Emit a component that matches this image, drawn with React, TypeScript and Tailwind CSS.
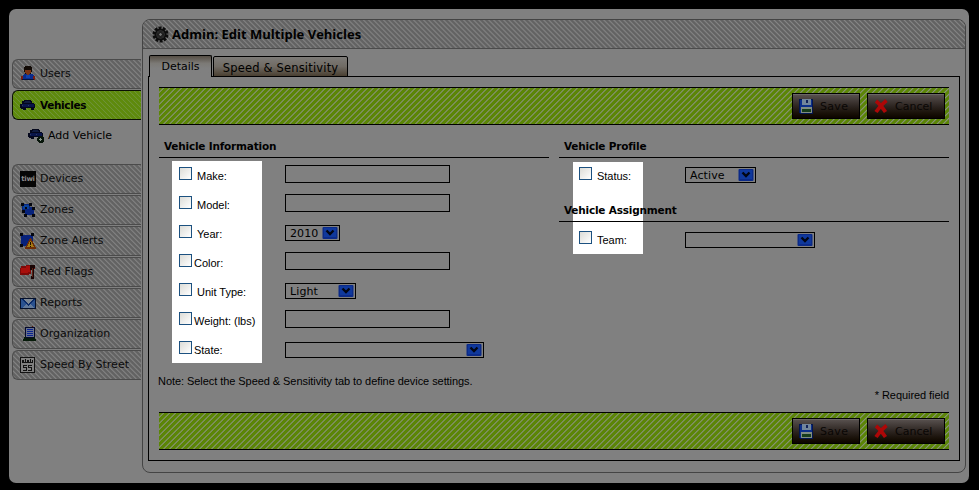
import type { ReactNode } from "react";

const GRAY_STRIPES =
  "bg-[repeating-linear-gradient(45deg,#616161_0px,#656565_1.3px,#858585_2.2px,#6c6c6c_3px,#616161_3.54px)]";
const GREEN_STRIPES =
  "bg-[repeating-linear-gradient(135deg,#5b8506_0px,#5b8506_2.3px,#88937a_3.2px,#88937a_3.4px,#5b8506_4.24px)]";
const ITEM_GREEN_STRIPES =
  "bg-[repeating-linear-gradient(45deg,#5e8a0c_0px,#5e8a0c_2px,#6f933a_2.8px,#5e8a0c_3.54px)]";

function Pic({ children }: { children: ReactNode }) {
  return (
    <svg width="16" height="16" viewBox="0 0 16 16" className="shrink-0" shapeRendering="crispEdges">
      {children}
    </svg>
  );
}

function UserIcon() {
  return (
    <Pic>
      <path d="M5 0h6v1h1v5h-1v3h-6v-3h-1v-5h1z" fill="#120a05" />
      <path d="M5 4h6v3h-1v2h-4v-2h-1z" fill="#7b3414" />
      <path d="M4 8h2l2 1 2-1h2l2 2v4h-12v-4z" fill="#0a2c8c" />
      <path d="M6 9h4v3h-4z" fill="#1140a8" />
      <path d="M1 10h2v4h-2zM13 10h2v4h-2z" fill="#7a1d10" />
      <path d="M2 13h12v1h-12z" fill="#051340" />
    </Pic>
  );
}

function CarShape() {
  return (
    <>
      <path d="M4 3h7v1h1v2h2v1h1v4h-1v2h-3v-2h-5v2h-3v-1h-2v-1h-1v-4h2v-3h1z" fill="#04071c" />
      <path d="M5 4h5l1 2h-7z" fill="#101c40" />
      <path d="M2 7h12v3h-12z" fill="#08144a" />
      <path d="M2 8h1v1h-1zM8 8h1v1h-1z" fill="#2c3a60" />
    </>
  );
}

function CarIcon() {
  return (
    <Pic>
      <CarShape />
    </Pic>
  );
}

function CarAddIcon() {
  return (
    <Pic>
      <g transform="translate(0 -2)">
        <CarShape />
      </g>
      <path d="M11 8h3l2 2v3l-2 2h-3l-2-2v-3z" fill="#07150a" />
      <path d="M12 10h1v1h1v1h-1v1h-1v-1h-1v-1h1z" fill="#87958a" />
    </Pic>
  );
}

function DeviceIcon() {
  return (
    <span className="flex h-4 w-4 shrink-0 items-center justify-center bg-[#060606] font-['DejaVu_Sans',sans-serif] text-[7px] leading-none font-bold tracking-[-0.3px] text-[#8a8a8a]">
      tiwi
    </span>
  );
}

function ZonesIcon() {
  return (
    <Pic>
      <path d="M2 2h8v3h4v8h-9v-4h-3z" fill="#07237c" />
      <path d="M3 3h6v4h-6z" fill="#0b419a" />
      <path
        d="M1 1h3v3h-3zM9 1h3v3h-3zM12 5h3v3h-3zM2 8h3v3h-3zM4 12h3v3h-3zM12 12h3v3h-3zM5 5h2v2h-2z"
        fill="#05070f"
      />
    </Pic>
  );
}

function AlertIcon() {
  return (
    <Pic>
      <path d="M1 2h12v11h-12z" fill="#07217a" />
      <path d="M0 0h3v3h-3zM11 0h3v3h-3zM0 11h3v3h-3z" fill="#05070f" />
      <path d="M10 5h1l5 10v1h-11v-1z" fill="#6d2e08" />
      <path d="M10 8h1l3 6h-7z" fill="#a57a13" />
      <path d="M10 9h1v3h-1zM10 13h1v1h-1z" fill="#1a0d00" />
    </Pic>
  );
}

function FlagIcon() {
  return (
    <Pic>
      <path d="M1 2h5v-1h9v4h-4v5l-4 1h-7v-7h1z" fill="#7c0908" />
      <path d="M1 4h5v-2h4v6l-4 1h-5z" fill="#a80e0b" />
      <path d="M10 1h5v3h-1v11h-3v-3h1v-6h-2z" fill="#1a0505" />
      <path d="M12 4h1v9h-1z" fill="#5c2012" />
    </Pic>
  );
}

function MailIcon() {
  return (
    <Pic>
      <path d="M0 3h16v11h-16z" fill="#04102b" />
      <path d="M1 4h14v9h-14z" fill="#2a5290" />
      <path d="M3 4h10l-5 5z" fill="#7c8794" />
      <path d="M2 13l4-4 2 2 2-2 4 4z" fill="#61799a" />
      <path d="M1 4h2l5 5 5-5h2l-7 7z" fill="#0a2a68" />
    </Pic>
  );
}

function BuildingIcon() {
  return (
    <Pic>
      <path d="M5 1h10v13h-10z" fill="#05092c" />
      <path d="M6 2h8v9h-8z" fill="#66718c" />
      <path d="M7 3h6v1h-6zM7 5h6v1h-6zM7 7h6v1h-6zM7 9h6v1h-6z" fill="#0b2390" />
      <path d="M12 0h1v1h-1z" fill="#5a200e" />
      <path d="M3 13h1v-2h2v1h7v-1h2v2h1v2h-13z" fill="#071b0a" />
    </Pic>
  );
}

function SpeedIcon() {
  return (
    <Pic>
      <path d="M0.5 0.5h14v15h-14z" fill="#808080" stroke="#141414" />
      <path d="M2 3h2v2h-2zM5 2h1v3h-1zM7 3h2v2h-2zM10 2h1v3h-1zM12 3h1v2h-1zM2 5h11v1h-11z" fill="#111" />
      <path
        d="M3 8h4v1h-3v1h3v4h-4v-1h3v-2h-3zM8 8h4v1h-3v1h3v4h-4v-1h3v-2h-3z"
        fill="#111"
      />
    </Pic>
  );
}

function GearIcon() {
  return (
    <svg width="17" height="17" viewBox="0 0 17 17" className="shrink-0">
      <circle cx="8.5" cy="8.5" r="6.6" fill="none" stroke="#0c0c0c" strokeWidth="2.8" strokeDasharray="2.9 1.25" />
      <circle cx="8.5" cy="8.5" r="4.4" fill="#333" stroke="#0c0c0c" strokeWidth="3" />
      <circle cx="8.5" cy="8.5" r="3.9" fill="none" stroke="#3c3c3c" strokeWidth="0.8" />
      <circle cx="8.5" cy="8.5" r="1.9" fill="#757575" stroke="#0b0b0b" strokeWidth="1" />
    </svg>
  );
}

function DiskIcon() {
  return (
    <Pic>
      <path d="M1 1h14v15h-13l-1-1z" fill="#031650" />
      <path d="M2 2h12v13h-12z" fill="#0c2f8a" />
      <path d="M4 1h9v6h-9z" fill="#72869b" />
      <path d="M8 2h2v3h-2z" fill="#12235a" />
      <path d="M3 9h11v6h-11z" fill="#7f8c84" />
      <path d="M4 11h9v3h-9z" fill="#173d1c" />
    </Pic>
  );
}

function CrossIcon() {
  return (
    <svg width="16" height="16" viewBox="0 0 16 16" className="shrink-0">
      <path d="M3 3Q7 6 12.500 14M13.500 2.500Q7.500 7 3 14" fill="none" stroke="#ac0707" strokeWidth="3.8" />
    </svg>
  );
}

function NavItem({ icon, label, active }: { icon: ReactNode; label: string; active?: boolean }) {
  return (
    <div
      className={
        "flex h-[30px] items-center gap-1 rounded-l-[6px] border border-r-0 pl-[7px] " +
        (active
          ? "border-[#0a1003] text-[10.5px] font-bold tracking-[-0.35px] " + ITEM_GREEN_STRIPES
          : "border-[#4b4b4b] text-[11px] text-[#0c0c0c] " + GRAY_STRIPES)
      }
    >
      {icon}
      <span>{label}</span>
    </div>
  );
}

function ActionBar() {
  const button =
    "flex h-[26px] items-center border border-black bg-linear-to-b from-[#5a5351] via-[#2e2622] to-[#0c0500] pl-[5px] text-[11px] text-[#0a0705] shadow-[inset_0_1px_0_#6a6665]";
  return (
    <div className={"flex h-[38px] items-center justify-end gap-[7px] border-y border-black pr-1 " + GREEN_STRIPES}>
      <div className={button + " w-[68px] gap-[6px]"}>
        <DiskIcon />
        <span className="pt-px tracking-[0.3px]">Save</span>
      </div>
      <div className={button + " w-[78px] gap-[6px]"}>
        <CrossIcon />
        <span className="pt-px">Cancel</span>
      </div>
    </div>
  );
}

function SectionTitle({ children }: { children: ReactNode }) {
  return (
    <div className="flex h-6 items-center border-b border-black pl-[5px] text-[10.5px] font-bold tracking-[-0.2px]">
      {children}
    </div>
  );
}

function Check() {
  return (
    <span className="mt-[9px] block h-[13px] w-[13px] shrink-0 border border-[#1c5180] bg-linear-to-br from-[#dcdcd7] to-white" />
  );
}

function Select({ width, value, offset = "mt-[9px]" }: { width: string; value?: string; offset?: string }) {
  return (
    <div
      className={
        "flex h-4 items-center justify-between border border-black pr-px pl-1 text-[11px] " + offset + " " + width
      }
    >
      <span className="pt-px tracking-[0.1px]">{value}</span>
      <svg width="16" height="12" viewBox="0 0 16 12" className="shrink-0">
        <rect x="0.500" width="15" height="12" rx="1" fill="#0b2a88" />
        <rect x="2" y="1" width="12" height="9" fill="#0f389c" />
        <path d="M4.500 3.500L8 7L11.500 3.500" fill="none" stroke="#020614" strokeWidth="2.400" />
      </svg>
    </div>
  );
}

function TextBox() {
  return <div className="mt-[7px] h-[18px] w-[165px] border border-black" />;
}

function Row({ label, gap, field }: { label: string; gap: string; field: ReactNode }) {
  return (
    <div className="flex h-[29px] items-start pl-5">
      <div className="flex w-[106px] items-start">
        <Check />
        <span
          className={
            "mt-[11px] font-['Liberation_Sans',Arial,sans-serif] text-[11px] leading-[14px] tracking-[-0.02px] whitespace-nowrap " +
            gap
          }
        >
          {label}
        </span>
      </div>
      {field}
    </div>
  );
}

export default function App() {
  return (
    <div className="h-[490px] w-[979px] overflow-hidden bg-black pt-[9px] pl-[9px] font-['DejaVu_Sans',Verdana,sans-serif] text-[11px] leading-[14px] text-black">
      <div className="flex h-[474px] w-[960px] rounded-[7px] bg-[#808080] pt-[10px] pl-[3px]">
        <nav className="flex w-[130px] flex-col gap-px pt-10 pr-px">
          <NavItem icon={<UserIcon />} label="Users" />
          <NavItem icon={<CarIcon />} label="Vehicles" active />
          <div className="mb-[13px] flex h-[29px] items-center gap-1 pl-4">
            <CarAddIcon />
            <span>Add Vehicle</span>
          </div>
          <NavItem icon={<DeviceIcon />} label="Devices" />
          <NavItem icon={<ZonesIcon />} label="Zones" />
          <NavItem icon={<AlertIcon />} label="Zone Alerts" />
          <NavItem icon={<FlagIcon />} label="Red Flags" />
          <NavItem icon={<MailIcon />} label="Reports" />
          <NavItem icon={<BuildingIcon />} label="Organization" />
          <NavItem icon={<SpeedIcon />} label="Speed By Street" />
        </nav>

        <main className="h-[454px] w-[824px] overflow-hidden rounded-[8px] border border-[#444]">
          <header className={"flex h-[29px] items-center gap-[3px] border-b border-[#4b4b4b] pl-[9px] " + GRAY_STRIPES}>
            <GearIcon />
            <h1 className="font-['Open_Sans','Trebuchet_MS',sans-serif] text-[13px] font-bold">
              Admin: Edit Multiple Vehicles
            </h1>
          </header>

          <div className="pt-[6px] pl-[5px]">
            <div className="relative z-10 flex h-[22px] items-end gap-px pl-px">
              <div className="flex h-[22px] w-[63px] items-center justify-center rounded-t-[2px] border border-b-0 border-black bg-linear-to-b from-[#554e45] via-[#7c7a76] via-35% to-[#808080] to-60% pt-px">
                Details
              </div>
              <div className="flex h-[21px] w-[135px] items-center justify-center rounded-t-[2px] border border-black bg-linear-to-b from-[#7d7b78] via-[#706b64] via-50% to-[#4a4032] pt-[3px] tracking-[0.12px]">
                <span className="tracking-[0.18px] text-[11.500px]">Speed &amp; Sensitivity</span>
              </div>
            </div>

            <div className="-mt-px h-[385px] w-[812px] border border-black pt-[10px] pr-[10px] pl-[10px]">
              <ActionBar />

              <div className="flex h-[245px] gap-[10px] pt-[9px]">
                <section className="relative isolate w-[390px]">
                  <div className="absolute top-[27px] left-[13px] -z-10 h-[202px] w-[90px] bg-white" />
                  <SectionTitle>Vehicle Information</SectionTitle>
                  <Row label="Make:" gap="ml-[5px]" field={<TextBox />} />
                  <Row label="Model:" gap="ml-[5px]" field={<TextBox />} />
                  <Row label="Year:" gap="ml-[5px]" field={<Select width="w-[55px]" value="2010" />} />
                  <Row label="Color:" gap="ml-[2px]" field={<TextBox />} />
                  <Row label="Unit Type:" gap="ml-[5px]" field={<Select width="w-[71px]" value="Light" />} />
                  <Row label="Weight: (lbs)" gap="ml-[2px]" field={<TextBox />} />
                  <Row label="State:" gap="ml-[2px]" field={<Select width="w-[199px]" offset="mt-[10px]" />} />
                </section>
                <section className="relative isolate w-[390px]">
                  <div className="absolute top-[28px] left-[14px] -z-10 h-[92px] w-[70px] bg-white" />
                  <SectionTitle>Vehicle Profile</SectionTitle>
                  <Row label="Status:" gap="ml-[5px]" field={<Select width="w-[71px]" value="Active" />} />
                  <div className="h-[11px]" />
                  <SectionTitle>Vehicle Assignment</SectionTitle>
                  <Row label="Team:" gap="ml-[5px]" field={<Select width="w-[130px]" offset="mt-[10px]" />} />
                </section>
              </div>

              <div className="h-[42px] font-['Liberation_Sans',Arial,sans-serif] text-[11px] tracking-[-0.06px]">
                <p className="-ml-px pt-[4px]">Note: Select the Speed &amp; Sensitivity tab to define device settings.</p>
                <p className="text-right">* Required field</p>
              </div>

              <ActionBar />
            </div>
          </div>
        </main>
      </div>
    </div>
  );
}
